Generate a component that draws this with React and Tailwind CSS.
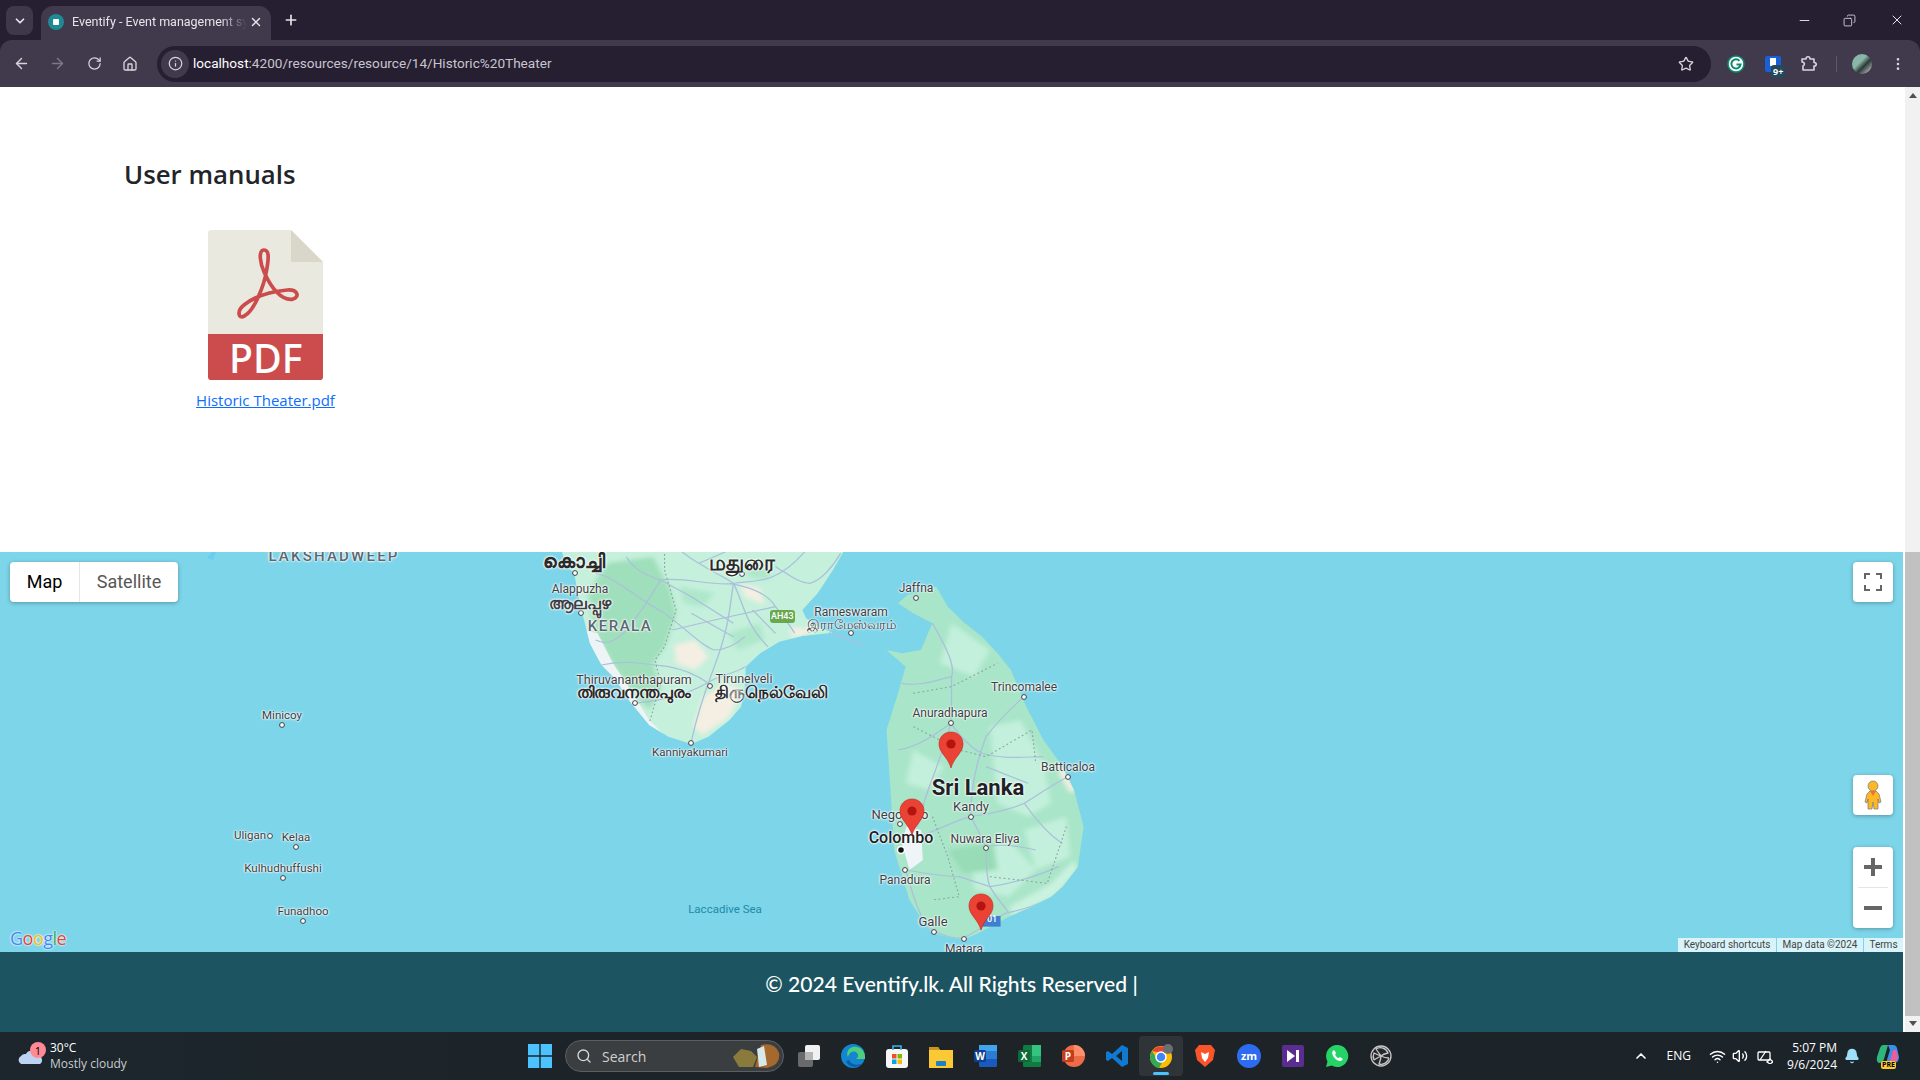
import {
  ArrowLeft, ArrowRight, Bell, ChevronDown, ChevronUp, Copy, EllipsisVertical, Home, Info, Minus, Plus,
  RotateCw, Search, Star, Volume2, Wifi, X,
} from 'lucide-react';

const labels = [
  { t: 'LAKSHADWEEP', x: 334, y: 556, c: 'text-[15px] font-medium tracking-[2.2px] text-[#5b6670]' },
  { t: 'കൊച്ചി', x: 574, y: 562, c: 'text-[18.5px] font-bold text-[#2a2a2a]' },
  { t: 'மதுரை', x: 742, y: 563, c: 'text-[21px] font-bold text-[#2a2a2a]' },
  { t: 'Alappuzha', x: 580, y: 589, c: 'text-[12px] text-[#3c4043]' },
  { t: 'ആലപ്പുഴ', x: 580, y: 604, c: 'text-[16px] font-bold text-[#3c4043]' },
  { t: 'KERALA', x: 620, y: 626, c: 'text-[15px] font-medium tracking-[1.5px] text-[#5b6670]' },
  { t: 'Rameswaram', x: 851, y: 612, c: 'text-[12px] text-[#3c4043]' },
  { t: 'இராமேஸ்வரம்', x: 851, y: 624, c: 'text-[13px] text-[#3c4043]' },
  { t: 'Jaffna', x: 916, y: 588, c: 'text-[12px] text-[#3c4043]' },
  { t: 'Thiruvananthapuram', x: 634, y: 680, c: 'text-[12.5px] text-[#3c4043]' },
  { t: 'തിരുവനന്തപുരം', x: 634, y: 693, c: 'text-[16px] font-bold text-[#2a2a2a]' },
  { t: 'Tirunelveli', x: 744, y: 679, c: 'text-[12.5px] text-[#3c4043]' },
  { t: 'திருநெல்வேலி', x: 771, y: 692, c: 'text-[17px] font-bold text-[#2a2a2a]' },
  { t: 'Kanniyakumari', x: 690, y: 753, c: 'text-[11.5px] text-[#3c4043]' },
  { t: 'Trincomalee', x: 1024, y: 687, c: 'text-[12px] text-[#3c4043]' },
  { t: 'Anuradhapura', x: 950, y: 713, c: 'text-[12px] text-[#3c4043]' },
  { t: 'Batticaloa', x: 1068, y: 767, c: 'text-[12px] text-[#3c4043]' },
  { t: 'Sri Lanka', x: 978, y: 788, c: 'text-[22px] font-bold text-[#202124]' },
  { t: 'Kandy', x: 971, y: 806, c: 'text-[13px] text-[#3c4043]' },
  { t: 'Negombo', x: 900, y: 814, c: 'text-[13px] text-[#3c4043]' },
  { t: 'Colombo', x: 901, y: 838, c: 'text-[16px] font-medium text-[#202124]' },
  { t: 'Nuwara Eliya', x: 985, y: 839, c: 'text-[12px] text-[#3c4043]' },
  { t: 'Panadura', x: 905, y: 880, c: 'text-[12px] text-[#3c4043]' },
  { t: 'Galle', x: 933, y: 921, c: 'text-[13px] text-[#3c4043]' },
  { t: 'Matara', x: 964, y: 949, c: 'text-[12px] text-[#3c4043]' },
  { t: 'Minicoy', x: 282, y: 716, c: 'text-[11.5px] text-[#3c4043]' },
  { t: 'Uligan', x: 250, y: 836, c: 'text-[11.5px] text-[#3c4043]' },
  { t: 'Kelaa', x: 296, y: 838, c: 'text-[11.5px] text-[#3c4043]' },
  { t: 'Kulhudhuffushi', x: 283, y: 869, c: 'text-[11.5px] text-[#3c4043]' },
  { t: 'Funadhoo', x: 303, y: 912, c: 'text-[11.5px] text-[#3c4043]' },
];

// town markers, page x and map-local y
const dots = [
  [575, 21], [742, 22], [581, 61], [851, 81], [916, 46], [635, 151], [710, 134], [691, 191],
  [1024, 145], [951, 171], [1068, 225], [971, 265], [900, 272], [986, 296], [905, 318],
  [934, 380], [964, 387], [282, 173], [270, 284], [296, 295], [283, 326], [303, 369],
];

const pins = [
  { x: 951, y: 179 },
  { x: 912, y: 246 },
  { x: 981, y: 341 },
];

const ROAD = '#abc0da';
const INDIA = 'M160 0 L172 40 L195 75 L203 130 L215 190 L235 280 L265 345 L300 385 L340 455 L390 525 L440 560 L500 582 L545 560 L600 510 L630 470 L640 410 L642 350 L680 310 L730 275 L790 258 L870 248 L835 232 L800 205 L790 180 L830 130 L870 60 L900 0 Z';
const LANKA = 'M1040 160 L1065 135 L1110 120 L1140 110 L1170 170 L1210 215 L1260 260 L1300 310 L1335 360 L1375 470 L1420 570 L1470 650 L1500 720 L1525 830 L1510 950 L1470 1010 L1440 1040 L1380 1075 L1330 1100 L1250 1150 L1210 1170 L1130 1150 L1095 1095 L1070 1050 L1030 900 L1022 750 L1010 540 L1040 430 L1060 350 L1010 300 L1050 310 L1100 300 L1130 220 L1080 190 Z';

function MapBase() {
  return (
    <svg width="1904" height="400" viewBox="0 0 1904 400" className="block">
      <defs>
        <filter id="soft"><feGaussianBlur stdDeviation="7" /></filter>
        <clipPath id="india"><path d={INDIA} /></clipPath>
        <clipPath id="lanka"><path d={LANKA} /></clipPath>
      </defs>
      <rect width="1904" height="400" fill="#7dd5ea" />
      <path d="M207 6 l5 -6 l4 0 l-3 8 z" fill="#6ccdf0" />
      <g transform="translate(500,-2) scale(0.3827,0.3333)">
        {/* south india */}
        <path d={INDIA} fill="#c4f0dc" />
        <g clipPath="url(#india)">
          <g filter="url(#soft)">
            <path d="M280 40 L400 20 L445 120 L460 190 L430 290 L400 340 L420 420 L390 480 L340 420 L300 350 L250 250 L230 130 Z" fill="#9fdfbb" />
            <path d="M470 110 L560 130 L530 170 L480 160 Z M640 40 L720 30 L700 90 L650 80 Z M600 250 L680 220 L690 270 L620 300 Z" fill="#aee7ca" />
            <path d="M455 285 L510 270 L545 320 L510 360 L460 340 Z M530 440 L590 400 L632 420 L600 500 L530 555 L505 530 Z M625 100 L680 115 L690 165 L640 140 Z M760 232 L830 237 L790 258 L760 262 Z" fill="#f4efe2" />
          </g>
          <path d="M215 240 L255 250 L295 340 L330 400 L390 510 L430 556 L390 530 L320 430 L270 350 L230 290 Z" fill="#eef3f6" />
          <g fill="none" stroke={ROAD} strokeWidth="3.5">
            <path d="M250 270 C300 300 340 240 420 90 C480 80 560 110 610 100 C660 90 720 110 800 0" />
            <path d="M610 100 C600 170 600 230 560 350 C530 440 510 520 500 575" />
            <path d="M470 0 C520 50 590 80 610 100 C640 170 640 220 700 290" />
            <path d="M350 460 C420 450 480 440 540 400 C580 370 620 370 640 350" />
            <path d="M600 100 C650 110 700 130 720 170 C740 200 760 230 770 250" />
            <path d="M250 70 C300 80 350 140 430 190 C490 240 530 290 560 300 C590 300 620 280 640 260" />
            <path d="M720 50 C750 70 780 100 810 100 C840 90 870 50 890 10" />
            <path d="M330 20 C350 60 390 80 420 90 L500 140 L610 220" />
            <path d="M265 345 C320 330 370 340 440 350 C490 360 520 380 545 400" />
            <path d="M450 240 L560 210 L720 170 M500 190 L610 260 M520 40 L600 0 M660 180 L720 250" />
          </g>
          <path d="M430 0 L430 60 L460 180 L430 290 L405 330 L420 400 L390 520" fill="none" stroke="#8aa39b" strokeWidth="3" strokeDasharray="5 7" />
        </g>
        <path d="M860 248 L950 285" fill="none" stroke={ROAD} strokeWidth="3.5" />
        {/* sri lanka */}
        <path d={LANKA} fill="#a9e5c8" />
        <g clipPath="url(#lanka)">
          <g filter="url(#soft)">
            <path d="M1280 530 L1360 510 L1420 640 L1440 760 L1380 800 L1300 760 Z M1230 900 L1330 870 L1400 960 L1330 1040 L1240 1020 Z M1080 600 L1160 650 L1120 720 L1060 700 Z M1180 220 L1280 300 L1240 380 L1150 340 Z M1370 840 L1480 800 L1490 920 L1400 960 Z" fill="#c2f0dc" />
            <path d="M1170 900 L1290 880 L1300 960 L1210 970 Z" fill="#97dcb6" />
            <path d="M1440 1000 L1500 930 L1510 960 L1450 1040 L1340 1100 L1330 1070 Z" fill="#c9f2df" />
            <path d="M1470 640 L1505 720 L1490 730 L1460 670 Z" fill="#f4efe2" />
          </g>
          <path d="M1062 830 L1100 840 L1105 930 L1070 960 L1050 880 Z" fill="#eef4f7" />
          <g fill="none" stroke={ROAD} strokeWidth="3.5">
            <path d="M1178 520 C1160 600 1130 680 1110 750 C1100 790 1095 820 1090 830" />
            <path d="M1178 520 C1210 570 1240 600 1260 610 C1320 630 1380 620 1420 620" />
            <path d="M1130 220 C1170 300 1190 350 1180 380 C1180 430 1180 480 1178 520 C1130 560 1090 590 1040 600" />
            <path d="M1370 440 C1320 490 1290 530 1270 560 C1240 650 1230 730 1230 800 C1250 840 1260 870 1270 890 C1320 880 1360 890 1400 900" />
            <path d="M1090 860 C1150 840 1190 810 1230 800 C1290 790 1330 780 1370 760 C1410 730 1450 700 1484 680" />
            <path d="M1060 960 C1080 1040 1100 1120 1130 1140 C1160 1160 1190 1165 1210 1165 C1250 1140 1290 1110 1320 1090 C1370 1080 1410 1060 1450 1040" />
            <path d="M1270 890 C1270 930 1270 980 1280 1010 C1300 1050 1320 1070 1330 1090" />
            <path d="M1060 960 C1110 970 1160 980 1200 980 L1280 1010 C1340 1000 1400 980 1460 950" />
            <path d="M1050 400 C1100 410 1140 390 1180 380 M1370 760 C1400 810 1440 860 1470 880 M1270 650 L1380 700" />
          </g>
          <path d="M1080 430 L1180 410 L1300 340 M1080 530 L1200 600 L1270 620 L1390 540 L1400 640 M1130 800 L1170 920 L1200 1040 L1130 1050 M1280 980 L1430 1000 L1480 830" fill="none" stroke="#8aa39b" strokeWidth="3" strokeDasharray="5 7" />
        </g>
        <rect x="1258" y="1098" width="50" height="32" fill="#3f7fd0" />
      </g>
      <rect x="770" y="58" width="25" height="13" rx="3" fill="#6aa84f" />
      {dots.map(([x, y]) => (
        <circle key={`${x}-${y}`} cx={x} cy={y} r="2.4" fill="#fff" stroke="#3c4043" strokeWidth="1" />
      ))}
      <circle cx="901" cy="298" r="3.5" fill="#111" stroke="#fff" strokeWidth="1.5" />
    </svg>
  );
}

function Pin({ x, y }) {
  return (
    <svg width="26" height="38" viewBox="0 0 26 38" style={{ left: x - 13, top: y }} className="absolute">
      <path d="M13 1 C6 1 1 6 1 13 C1 22 10 26 13 37 C16 26 25 22 25 13 C25 6 20 1 13 1 Z" fill="#ea4335" stroke="#c5221f" strokeWidth="0.6" />
      <circle cx="13" cy="13" r="4.6" fill="#b3140f" />
    </svg>
  );
}

function MapPanel() {
  return (
    <div className='relative h-[400px] overflow-hidden font-["Roboto","Noto_Sans",sans-serif]'>
      <MapBase />
      {labels.map((l) => (
        <span
          key={l.t}
          style={{ left: l.x, top: l.y - 552 }}
          className={`absolute -translate-x-1/2 -translate-y-1/2 whitespace-nowrap leading-none [text-shadow:0_0_2px_#fff,0_0_2px_#fff,0_0_3px_#fff] ${l.c}`}
        >
          {l.t}
        </span>
      ))}
      <span className="absolute left-[771px] top-[59px] text-[9px] font-medium leading-[11px] text-white">AH43</span>
      <span className="absolute top-[352px] -translate-x-1/2 whitespace-nowrap text-[11.5px] leading-none text-[#1c8aa8]" style={{ left: 725 }}>Laccadive Sea</span>
      <span className="absolute left-[987px] top-[362px] text-[9px] font-medium leading-[10px] text-white">01</span>
      {pins.map((p) => <Pin key={p.x} {...p} />)}

      <div className="absolute left-[10px] top-[10px] flex h-10 overflow-hidden rounded-sm bg-white pb-[2px] text-[18px] shadow-[0_1px_4px_rgba(0,0,0,0.3)]">
        <div className="flex w-[69px] items-center justify-center text-black">Map</div>
        <span className="-mb-[2px] w-px bg-[#e6e6e6]" />
        <div className="flex w-[98px] items-center justify-center text-[#565656]">Satellite</div>
      </div>

      <div className="absolute left-[1853px] top-[10px] flex h-10 w-10 items-center justify-center rounded-sm bg-white shadow-[0_1px_4px_rgba(0,0,0,0.3)]">
        <svg width="18" height="18" viewBox="0 0 18 18" fill="none" stroke="#666" strokeWidth="2">
          <path d="M1 6V1h5M12 1h5v5M17 12v5h-5M6 17H1v-5" />
        </svg>
      </div>
      <div className="absolute left-[1853px] top-[223px] flex h-10 w-10 items-center justify-center rounded-sm bg-white shadow-[0_1px_4px_rgba(0,0,0,0.3)]">
        <svg width="18" height="30" viewBox="0 0 18 30">
          <path d="M6 11 L12 11 L15 14 L17 22 L15 23 L14 19 L14 29 L10 29 L9 22 L8 29 L4 29 L4 19 L3 23 L1 22 L3 14 Z" fill="#fdb827" stroke="#777" strokeWidth="0.7" />
          <circle cx="9" cy="6" r="5" fill="#fdb827" stroke="#777" strokeWidth="0.7" />
          <path d="M6 11 L12 11 L9 16 Z" fill="#e8762c" />
        </svg>
      </div>
      <div className="absolute left-[1853px] top-[295px] flex h-[81px] w-10 flex-col items-center rounded-sm bg-white shadow-[0_1px_4px_rgba(0,0,0,0.3)]">
        <div className="flex h-10 items-center justify-center">
          <svg width="18" height="18" viewBox="0 0 18 18" fill="#666"><path d="M7 0h4v7h7v4h-7v7H7v-7H0V7h7z" /></svg>
        </div>
        <div className="h-px w-[30px] bg-[#e6e6e6]" />
        <div className="flex h-10 items-center justify-center">
          <svg width="18" height="18" viewBox="0 0 18 18" fill="#666"><path d="M0 7h18v4H0z" /></svg>
        </div>
      </div>

      <div className="absolute bottom-[3px] left-[10px] text-[18px] font-medium leading-[22px] tracking-[-0.5px] [text-shadow:0_0_2px_#fff,0_0_2px_#fff] font-['Open_Sans',sans-serif]">
        <span className="text-[#4285f4]">G</span>
        <span className="text-[#ea4335]">o</span>
        <span className="text-[#fbbc05]">o</span>
        <span className="text-[#4285f4]">g</span>
        <span className="text-[#34a853]">l</span>
        <span className="text-[#ea4335]">e</span>
      </div>

      <div className="absolute bottom-0 right-0 flex h-[14px] gap-px text-[10px] leading-[14px] text-[#444]">
        <span className="w-[98px] bg-white/70 text-center">Keyboard shortcuts</span>
        <span className="w-[86px] bg-white/70 text-center">Map data ©2024</span>
        <span className="w-[39px] bg-white/70 text-center">Terms</span>
      </div>
    </div>
  );
}

function PdfIcon() {
  return (
    <svg width="115" height="150" viewBox="322 270 345 450" className="block">
      <path d="M332 270 H571 L667 366 V710 Q667 720 657 720 H332 Q322 720 322 710 V280 Q322 270 332 270 Z" fill="#e9e9e0" />
      <path d="M571 270 L667 366 H571 Z" fill="#d9d7ca" />
      <path d="M322 582 H667 V710 Q667 720 657 720 H332 Q322 720 322 710 Z" fill="#cc4b4c" />
      <path d="M490 330 C472 330 478 372 492 400 C510 440 540 482 575 478 C600 470 590 448 560 450 C510 455 460 470 430 495 C405 515 415 542 435 525 C460 510 490 440 498 390 C505 350 505 330 490 330 Z" fill="none" stroke="#cc4b4c" strokeWidth="11" />
      <text x="495" y="698" textAnchor="middle" fill="#fff" fontSize="118" fontWeight="500" fontFamily="Noto Sans, sans-serif">PDF</text>
    </svg>
  );
}

function Chrome() {
  return (
    <>
      <div className="flex h-10 items-end bg-[#261e31] pl-[6px] text-[#e6e3ea]">
        <div className="mb-[5px] flex h-[29px] w-[27px] items-center justify-center rounded-lg bg-[#3f384b]">
          <ChevronDown size={14} strokeWidth={3} />
        </div>
        <div className="ml-2 flex h-[34px] w-[230px] items-center rounded-t-xl bg-[#413a4c] pb-[2px] pl-[7px]">
          <span className="flex h-4 w-4 items-center justify-center rounded-full bg-[#1f8a94]">
            <span className="h-[6px] w-[6px] rounded-[1px] bg-white" />
          </span>
          <span className="ml-2 w-[175px] overflow-hidden whitespace-nowrap font-['Roboto',sans-serif] text-[12.5px] [mask-image:linear-gradient(to_right,#000_85%,transparent)]">Eventify - Event management system</span>
          <X size={14} strokeWidth={2.5} className="ml-[2px]" />
        </div>
        <Plus size={16} strokeWidth={2.5} className="mb-3 ml-3" />
        <div className="mb-3 ml-auto flex items-center">
          <Minus size={15} strokeWidth={1.5} className="mr-[31px]" />
          <Copy size={13} strokeWidth={1.5} className="mr-[33px] -scale-x-100" />
          <X size={16} strokeWidth={1.5} className="mr-[15px]" />
        </div>
      </div>
      <div className="flex h-[47px] items-center rounded-t-xl bg-[#413a4c] pl-[13px] text-[#d8d4dc]">
        <ArrowLeft size={17} />
        <ArrowRight size={17} className="ml-[19px] text-[#7d7885]" />
        <RotateCw size={15} className="ml-[21px]" />
        <Home size={16} className="ml-[20px]" />
        <div className="ml-[19px] flex h-9 w-[1554px] items-center rounded-full bg-[#261e31] pl-1">
          <span className="flex h-7 w-7 items-center justify-center rounded-full bg-[#413a4c]">
            <Info size={15} />
          </span>
          <span className="ml-[4px] font-['Roboto',sans-serif] text-[13.6px] text-[#c9c5ce]"><span className="text-white">localhost</span>:4200/resources/resource/14/Historic%20Theater</span>
          <Star size={16} className="ml-auto mr-[17px]" />
        </div>
        <svg width="18" height="18" viewBox="0 0 18 18" className="ml-4">
          <circle cx="9" cy="9" r="8" fill="#fff" stroke="#0f8a6e" strokeWidth="1.5" />
          <path d="M12.5 5.8 A4.6 4.6 0 1 0 13.6 9.4 H9.5" fill="none" stroke="#0f8a6e" strokeWidth="2" />
        </svg>
        <div className="relative ml-[20px] h-4 w-4 rounded-[2px] bg-[#1a5fd8]">
          <span className="absolute left-[5px] top-[2px] h-2 w-[6px] bg-white" />
          <span className="absolute left-[6px] top-[9px] rounded-[3px] bg-[#24485c] px-[2px] text-[9px] font-bold leading-[13px] text-white">9+</span>
        </div>
        <svg width="18" height="18" viewBox="0 0 18 18" fill="none" stroke="#d8d4dc" strokeWidth="1.6" className="ml-[19px]">
          <path d="M2 4 H6 C6 1 10 1 10 4 H14 V7.5 C17 7.5 17 11 14 11 V15 H3 V11 C5 10 5 7 2 7 Z" strokeLinejoin="round" />
        </svg>
        <span className="ml-[18px] h-4 w-px bg-[#5e5868]" />
        <span className="ml-[15px] h-5 w-5 rounded-full bg-[linear-gradient(135deg,#8bb5a8_40%,#2b3a3a_60%,#ddd)]" />
        <EllipsisVertical size={16} className="ml-[18px]" />
      </div>
    </>
  );
}

function Tile({ children, active }) {
  return (
    <div className={`relative flex h-10 w-[44px] shrink-0 items-center justify-center ${active ? 'rounded bg-[#2e3438]' : ''}`}>
      {children}
      {active && <span className="absolute bottom-[1px] h-[3px] w-4 rounded-full bg-[#4cc2ff]" />}
    </div>
  );
}

function Taskbar() {
  return (
    <div className="flex h-12 items-center bg-[linear-gradient(90deg,#1c262c,#1e2327_50%,#1b2429)] text-white">
      <div className="flex w-[518px] shrink-0 items-center pl-[18px]">
        <div className="relative h-6 w-6">
          <svg width="26" height="20" viewBox="0 0 26 20" className="absolute top-[5px]">
            <path d="M8 5 A6 6 0 0 1 19 6 A5 5 0 0 1 22 15 H3 A4.5 4.5 0 0 1 3 7 A5 5 0 0 1 8 5 Z" fill="#bcd4f2" />
          </svg>
          <span className="absolute -top-[2px] left-3 flex h-4 w-4 items-center justify-center rounded-full bg-[#ff8a95] text-[11px] leading-none text-black">1</span>
        </div>
        <div className="ml-2 text-[12px] leading-4">
          <div>30°C</div>
          <div className="text-[#c8ccce]">Mostly cloudy</div>
        </div>
      </div>

      <Tile>
        <svg width="24" height="24" viewBox="0 0 24 24" fill="#4cc2ff">
          <path d="M0 0h11.3v11.3H0zM12.7 0H24v11.3H12.7zM0 12.7h11.3V24H0zM12.7 12.7H24V24H12.7z" />
        </svg>
      </Tile>
      <div className="ml-[3px] flex h-8 w-[219px] shrink-0 items-center rounded-full border border-[#5a5f62] bg-[#3a3e40] pl-[10px]">
        <Search size={16} className="text-[#d8d8d8]" />
        <span className="ml-[10px] text-[14px] text-[#d0d0d0]">Search</span>
        <svg width="50" height="26" viewBox="0 0 50 26" className="ml-auto mr-[2px]">
          <path d="M30 2 Q44 -1 48 10 Q50 22 36 25 L24 24 Z" fill="#a5692e" />
          <path d="M26 6 L33 3 L36 22 L28 24 Z" fill="#d8e8e8" />
          <path d="M2 14 L10 6 L20 8 L26 14 L22 24 L8 24 Z" fill="#8a7b3c" />
        </svg>
      </div>
      <div className="ml-[3px] flex items-center">
        <Tile>
          <svg width="24" height="24" viewBox="0 0 24 24">
            <rect x="1" y="8" width="15" height="15" rx="2" fill="#6a6a6a" />
            <rect x="8" y="1" width="15" height="15" rx="2" fill="#f1f1f1" />
            <rect x="8" y="8" width="8" height="8" fill="#b5b5b5" />
          </svg>
        </Tile>
        <Tile>
          <svg width="24" height="24" viewBox="0 0 24 24">
            <circle cx="12" cy="12" r="12" fill="#1486d1" />
            <path d="M24 13 C24 6 18 2 12 3 C7 4 5 9 7 13 C8 8 13 6 16 9 C18 11 17 14 15 15 L24 15 Z" fill="#4ed07a" />
            <path d="M8 16 C10 21 17 22 22 19 C18 24 8 25 5 17 Z" fill="#0b5da8" />
          </svg>
        </Tile>
        <Tile>
          <svg width="24" height="24" viewBox="0 0 24 24">
            <rect x="1" y="5" width="22" height="19" rx="3" fill="#f6f6f6" />
            <path d="M8 6 V2 H16 V6" fill="none" stroke="#35b5e8" strokeWidth="1.6" />
            <path d="M7 10h4.5v4.5H7z" fill="#f25022" /><path d="M12.5 10H17v4.5h-4.5z" fill="#7fba00" />
            <path d="M7 15.5h4.5V20H7z" fill="#00a4ef" /><path d="M12.5 15.5H17V20h-4.5z" fill="#ffb900" />
          </svg>
        </Tile>
        <Tile>
          <svg width="24" height="24" viewBox="0 0 24 24">
            <path d="M0 3h9l2 3h13v18H0z" fill="#fcc934" />
            <path d="M0 3h9l2 3H0z" fill="#c9941f" />
            <rect x="7" y="17" width="10" height="5" rx="1" fill="#1b80c4" />
          </svg>
        </Tile>
        <Tile>
          <svg width="24" height="24" viewBox="0 0 24 24">
            <rect x="6" y="1" width="18" height="22" rx="1.5" fill="#185abd" />
            <rect x="6" y="1" width="18" height="6" fill="#41a5ee" />
            <rect x="6" y="7" width="18" height="8" fill="#2b7cd3" />
            <rect x="1" y="6" width="12" height="12" rx="1.5" fill="#103f91" />
            <text x="7" y="15.5" textAnchor="middle" fontSize="10" fontWeight="700" fill="#fff" fontFamily="Open Sans, sans-serif">W</text>
          </svg>
        </Tile>
        <Tile>
          <svg width="24" height="24" viewBox="0 0 24 24">
            <rect x="6" y="1" width="18" height="22" rx="1.5" fill="#107c41" />
            <rect x="15" y="1" width="9" height="11" fill="#33c481" />
            <rect x="15" y="12" width="9" height="6" fill="#21a366" />
            <rect x="1" y="6" width="12" height="12" rx="1.5" fill="#0b6a38" />
            <text x="7" y="15.5" textAnchor="middle" fontSize="10" fontWeight="700" fill="#fff" fontFamily="Open Sans, sans-serif">X</text>
          </svg>
        </Tile>
        <Tile>
          <svg width="24" height="24" viewBox="0 0 24 24">
            <circle cx="13" cy="12" r="11" fill="#ed6c47" />
            <path d="M13 1 A11 11 0 0 1 24 12 H13 Z" fill="#ff8f6b" />
            <rect x="1" y="6" width="12" height="12" rx="1.5" fill="#c43e1c" />
            <text x="7" y="15.5" textAnchor="middle" fontSize="10" fontWeight="700" fill="#fff" fontFamily="Open Sans, sans-serif">P</text>
          </svg>
        </Tile>
        <Tile>
          <svg width="24" height="24" viewBox="0 0 24 24">
            <path d="M17 1 L23 4 V20 L17 23 L7 14 L3 17 L1 16 V8 L3 7 L7 10 Z M17 7 L11 12 L17 17 Z" fill="#0e7ad1" fillRule="evenodd" />
          </svg>
        </Tile>
        <Tile active>
          <svg width="24" height="24" viewBox="0 0 24 24">
            <circle cx="12" cy="13" r="11" fill="#fbbc05" />
            <path d="M3 7 A11 11 0 0 1 22 9 H12 Z" fill="#ea4335" />
            <path d="M3 7 A11 11 0 0 0 10 24 L15 15 L8 15 Z" fill="#34a853" />
            <circle cx="12" cy="13" r="5" fill="#4285f4" stroke="#fff" strokeWidth="1.5" />
            <circle cx="19" cy="5" r="5" fill="#6b6f72" />
          </svg>
        </Tile>
        <Tile>
          <svg width="24" height="24" viewBox="0 0 24 24">
            <path d="M6 1 H18 L22 6 L20 16 L12 23 L4 16 L2 6 Z" fill="#fb542b" />
            <path d="M8 8 L12 10 L16 8 L15 14 L12 18 L9 14 Z" fill="#fff" />
          </svg>
        </Tile>
        <Tile>
          <span className="flex h-6 w-6 items-center justify-center rounded-full bg-[#2d6cf0] text-[11px] font-bold text-white">zm</span>
        </Tile>
        <Tile>
          <svg width="24" height="24" viewBox="0 0 24 24">
            <rect x="1" y="1" width="22" height="22" rx="2" fill="#5c2d91" />
            <path d="M6 6 L14 12 L6 18 Z M15 6 H18 V18 H15 Z" fill="#fff" />
          </svg>
        </Tile>
        <Tile>
          <svg width="24" height="24" viewBox="0 0 24 24">
            <path d="M12 1 A11 11 0 0 0 2.5 17.5 L1 23 L6.7 21.5 A11 11 0 1 0 12 1 Z" fill="#25d366" />
            <path d="M8 6.5 C6.5 8 7 11 9.5 14 C12 16.8 15.5 18 17.5 16 L17.5 14.5 L14.8 13 L13.5 14.2 C12 13.5 10.7 12 10 10.5 L11 9.2 L9.7 6.5 Z" fill="#fff" />
          </svg>
        </Tile>
        <Tile>
          <svg width="22" height="22" viewBox="0 0 22 22" fill="none" stroke="#c8c8c8" strokeWidth="1.3">
            <circle cx="11" cy="11" r="10" fill="#26292b" />
            <path d="M6 4 A8 8 0 0 1 18 8 Q13 9 11 11 Q8 7 6 4 M19 13 A8 8 0 0 1 9 19 Q11 14 11 11 Q15 13 19 13 M4 15 A8 8 0 0 1 4 8 Q8 10 11 11 Q7 13 4 15" />
          </svg>
        </Tile>
      </div>

      <div className="ml-auto flex items-center pr-[20px]">
        <ChevronUp size={16} strokeWidth={2.5} />
        <span className="ml-[18px] text-[12px]">ENG</span>
        <Wifi size={17} className="ml-[18px]" />
        <Volume2 size={16} className="ml-[6px]" />
        <svg width="16" height="16" viewBox="0 0 16 16" fill="none" stroke="#fff" strokeWidth="1.3" className="ml-[9px]">
          <rect x="1" y="4" width="12" height="8" rx="1" />
          <path d="M3 12 L9 3 M10 14 l3 -3 l3 3 l-3 2 z" />
        </svg>
        <div className="ml-2 w-[56px] text-right text-[12px] leading-[17px]">
          <div>5:07 PM</div>
          <div>9/6/2024</div>
        </div>
        <Bell size={16} fill="#9fe0f8" stroke="#9fe0f8" className="ml-[7px]" />
        <div className="relative ml-[16px] h-6 w-[24px]">
          <svg width="23" height="20" viewBox="0 0 23 20" className="absolute left-0 top-0">
            <path d="M7 1 H12 L8 15 Q7 19 3 19 Q0 18 1 13 L4 4 Q5 1 7 1 Z" fill="#2fb67c" />
            <path d="M12 1 H17 Q20 1 21 4 L23 13 Q23 18 19 19 H10 L14 6 Z" fill="#3a8fe8" />
            <path d="M17 6 L20 6 L22 12 L21 17 L14 17 Z" fill="#e85fa0" />
          </svg>
          <span className="absolute -bottom-[1px] left-[5px] rounded-[2px] bg-[#fcc934] px-[1px] text-[7px] font-bold leading-[8px] text-black">PRE</span>
        </div>
      </div>
    </div>
  );
}

export default function App() {
  return (
    <div className="flex h-screen w-[1920px] flex-col overflow-hidden bg-[#261e31] font-['Open_Sans',sans-serif]">
      <Chrome />
      <div className="flex h-[945px] bg-white">
        <div className="flex w-[1903px] flex-col">
          <section className="h-[465px] pl-[124px] pt-[68px]">
            <h2 className="text-[25.8px] font-semibold leading-[38px] text-[#212529]">User manuals</h2>
            <div className="ml-[72px] mt-[37px] flex w-[139px] flex-col items-center">
              <PdfIcon />
              <a href="#" className="mt-[8px] whitespace-nowrap text-[15px] leading-6 text-[#0d6efd] underline">Historic Theater.pdf</a>
            </div>
          </section>
          <MapPanel />
          <footer className="flex h-20 justify-center bg-[#1c5561] pt-[18px] font-['Lato',sans-serif] text-[21.1px] font-medium leading-7 text-white">
            © 2024 Eventify.lk. All Rights Reserved |
          </footer>
        </div>
        <div className="ml-[2px] flex w-[15px] flex-col items-center bg-[#f1f1f1]">
          <span className="mt-[6px] h-0 w-0 border-x-[4px] border-b-[5px] border-x-transparent border-b-[#505050]" />
          <span className="mt-[454px] h-[464px] w-full bg-[#c1c1c1]" />
          <span className="mt-[5px] h-0 w-0 border-x-[4px] border-t-[5px] border-x-transparent border-t-[#505050]" />
        </div>
      </div>
      <Taskbar />
    </div>
  );
}
